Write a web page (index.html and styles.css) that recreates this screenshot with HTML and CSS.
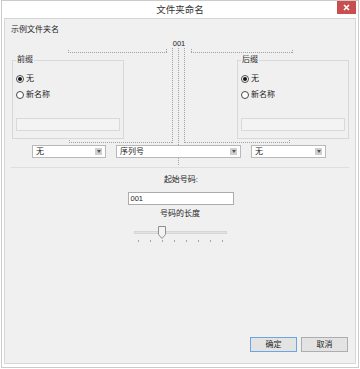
FILE: index.html
```html
<!DOCTYPE html>
<html lang="zh-CN">
<head>
<meta charset="utf-8">
<title>文件夹命名</title>
<link rel="stylesheet" href="styles.css">
</head>
<body>
<div class="window">
  <div class="titlebar">
    <span></span>
    <span class="title">文件夹命名</span>
    <span class="close">
      <svg width="7" height="7" viewBox="0 0 7 7"><path d="M1 1L6 6M6 1L1 6" stroke="#fff" stroke-width="1.6"/></svg>
    </span>
  </div>
  <div class="panel">
    <svg class="connectors" width="350" height="150" viewBox="5 19 350 150">
      <g stroke="#a2a2a2" stroke-width="1" stroke-dasharray="1 1" fill="none">
        <path d="M68 52.5H167"/>
        <path d="M68.5 50V53M166.5 49V53"/>
        <path d="M191 52.5H293"/>
        <path d="M191.5 49V53M292.5 50V53"/>
        <path d="M172.5 48V143"/>
        <path d="M178.5 48V145"/>
        <path d="M178.5 158V166"/>
        <path d="M184.5 48V143"/>
        <path d="M69 142.5H173"/>
        <path d="M69.5 140V143"/>
        <path d="M185 142.5H290"/>
        <path d="M289.5 140V143"/>
      </g>
    </svg>
    <div class="example-title">示例文件夹名</div>
    <div class="sample">001</div>
    <div class="groups">
      <fieldset class="group">
        <legend>前缀</legend>
        <label class="radio-row"><span class="radio checked"></span>无</label>
        <label class="radio-row second"><span class="radio"></span>新名称</label>
        <div class="field disabled"></div>
      </fieldset>
      <fieldset class="group">
        <legend>后缀</legend>
        <label class="radio-row"><span class="radio checked"></span>无</label>
        <label class="radio-row second"><span class="radio"></span>新名称</label>
        <div class="field disabled"></div>
      </fieldset>
    </div>
    <div class="combos">
      <div class="combo small"><span>无</span><span class="arrow"></span></div>
      <div class="combo wide"><span>序列号</span><span class="arrow"></span></div>
      <div class="combo small3"><span>无</span><span class="arrow"></span></div>
    </div>
    <div class="numbering">
      <div class="caption first">起始号码:</div>
      <div class="field start">001</div>
      <div class="caption">号码的长度</div>
      <div class="slider">
        <div class="track"></div>
        <svg class="thumb" width="8" height="13" viewBox="0 0 8 13"><path d="M0.5 0.5H7.5V8.5L4 12.5L0.5 8.5Z" fill="#f3f3f3" stroke="#8f8f8f"/></svg>
        <div class="ticks"><i></i><i></i><i></i><i></i><i></i><i></i><i></i><i></i></div>
      </div>
    </div>
    <div class="buttons">
      <button class="btn default">确定</button>
      <button class="btn">取消</button>
    </div>
  </div>
</div>
</body>
</html>
```
FILE: styles.css
```css
* { box-sizing: border-box; }
html, body { margin: 0; padding: 0; background: #fff; }
body {
  width: 360px;
  height: 369px;
  font-family: "Liberation Sans", "Noto Sans CJK SC", sans-serif;
  font-size: 8px;
  line-height: 10px;
  color: #1e1e1e;
}
.window {
  margin-left: 1px;
  width: 358px;
  height: 368px;
  border: 1px solid #cbcbcb;
  background: #fff;
  display: flex;
  flex-direction: column;
}
.titlebar {
  height: 17px;
  display: grid;
  grid-template-columns: 1fr auto 1fr;
  align-items: start;
}
.title {
  font-size: 9.5px;
  line-height: 18px;
  color: #333;
}
.close {
  justify-self: end;
  margin-right: 2px;
  width: 19px;
  height: 13px;
  background: #c94f4f;
  display: flex;
  align-items: center;
  justify-content: center;
}
.close svg { display: block; }
.panel {
  position: relative;
  margin: 0 2px 3px;
  height: 346px;
  border: 1px solid #d7d7d7;
  background: #f0f0f0;
  display: flex;
  flex-direction: column;
}
.connectors {
  position: absolute;
  left: 0;
  top: 0;
}
.example-title {
  padding: 6px 0 0 6px;
}
.sample {
  margin-top: 4px;
  text-align: center;
  font-size: 7.5px;
  padding-right: 2px;
}
.groups {
  margin-top: 6px;
  display: flex;
  justify-content: space-between;
  padding: 0 6px 0 7px;
}
.group {
  margin: 0;
  width: 112px;
  height: 84px;
  padding: 0 3px 7px;
  border: 1px solid #d8d8d8;
  min-width: 0;
}
.group legend {
  padding: 0 1px;
  line-height: 10px;
}
.radio-row {
  display: flex;
  align-items: center;
  gap: 2px;
  height: 10px;
  margin-top: 9px;
}
.radio-row.second { margin-top: 6px; }
.radio {
  width: 8px;
  height: 8px;
  border: 1px solid #4a4a4a;
  border-radius: 50%;
  background: #fff;
  display: flex;
  align-items: center;
  justify-content: center;
}
.radio.checked::after {
  content: "";
  width: 4px;
  height: 4px;
  border-radius: 50%;
  background: #111;
}
.field {
  height: 13px;
  border: 1px solid #acacac;
  background: #fff;
  font-size: 7.5px;
  line-height: 11px;
  padding-left: 2px;
}
.field.disabled {
  margin-top: 18px;
  border-color: #d9d9d9;
  background: #f3f3f3;
}
.combos {
  margin-top: 6px;
  display: flex;
  gap: 10px;
  padding-left: 27px;
}
.combo {
  position: relative;
  height: 13px;
  border: 1px solid #b9b9b9;
  background: #fff;
  display: flex;
  align-items: center;
  justify-content: space-between;
  padding: 0 3px 0 3px;
}
.combo.small { width: 74px; }
.combo.wide { width: 125px; }
.combo.small3 { width: 75px; }
.arrow {
  width: 7px;
  height: 7px;
  background: #cfcfcf;
  display: flex;
  align-items: center;
  justify-content: center;
}
.arrow::after {
  content: "";
  border-left: 2.5px solid transparent;
  border-right: 2.5px solid transparent;
  border-top: 3px solid #555;
}
.numbering {
  margin: 9px 6px 0 6px;
  border-top: 1px solid #dedede;
  display: flex;
  flex-direction: column;
  align-items: center;
}
.caption { margin-top: 4px; }
.caption.first { margin-top: 7px; padding-left: 2px; }
.field.start {
  margin-top: 7px;
  width: 106px;
  margin-left: 1px;
}
.slider {
  position: relative;
  margin-top: 5px;
  width: 93px;
  height: 20px;
}
.track {
  margin-top: 7px;
  height: 3px;
  background: #e3e3e3;
  border: 1px solid #d6d6d6;
}
.thumb {
  position: absolute;
  left: 24px;
  top: 2px;
  display: block;
}
.ticks {
  margin-top: 6px;
  display: flex;
  gap: 11px;
  padding: 0 4px;
}
.ticks i {
  width: 1px;
  height: 2px;
  background: #a5a5a5;
}
.buttons {
  margin-top: auto;
  display: flex;
  justify-content: flex-end;
  gap: 4px;
  padding: 0 7px 11px 0;
}
.btn {
  width: 47px;
  height: 15px;
  padding: 0;
  border: 1px solid #adadad;
  background: #e3e3e3;
  font-family: "Liberation Sans", "Noto Sans CJK SC", sans-serif;
  font-size: 8px;
  line-height: 13px;
  color: #1e1e1e;
}
.btn.default { border-color: #6aa6e0; }
```
